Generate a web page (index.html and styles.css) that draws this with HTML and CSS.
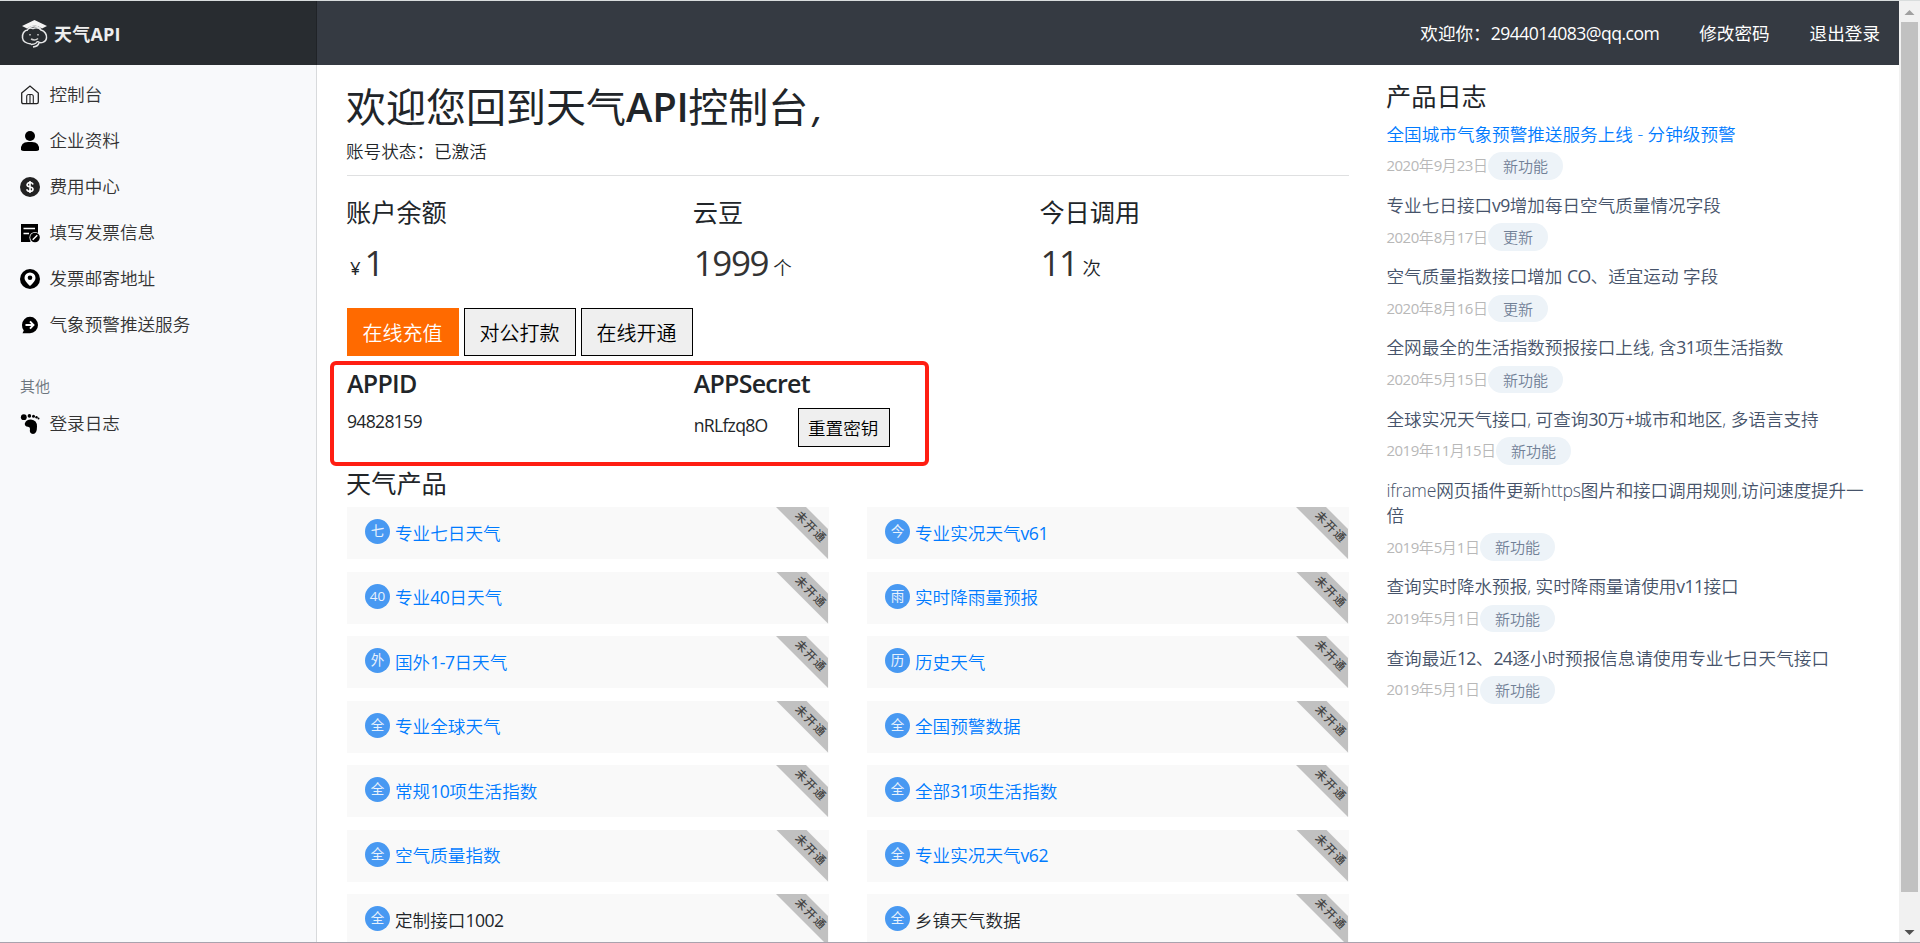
FILE: index.html
```html
<!DOCTYPE html>
<html lang="zh-CN">
<head>
<meta charset="utf-8">
<title>天气API控制台</title>
<link rel="stylesheet" href="styles.css">
</head>
<body>
<div class="page">
  <div class="app">
    <header class="topbar">
      <div class="brand">
        <svg class="brand-icon" width="28" height="30" viewBox="0 0 28 30" fill="none">
          <path d="M1 7 13.500 1 26 7 21 9.500Q13.500 3.500 6 9.500Z" fill="#f4f4f4"/>
          <path d="M7 9.500Q13 4.500 20 9.500M7 11C3 11 1 15 1.500 19C2 23 6 24.500 10 25M20 11C24 12 26 16 25.500 19C25 24 19 24.500 17 22.500M6.500 10.500Q9 8 12 9.500Q17 7.500 20.500 11.500M10 25.500Q16 25 16.500 22M18 24Q17 27.500 12 28" stroke="#e6e7e8" stroke-width="1.500"/>
          <path d="M9 15v1.500M17 15v1.500M10 20q4 2 7-.500" stroke="#ccc" stroke-width="1.500"/>
        </svg>
        <span class="brand-name">天气API</span>
      </div>
      <nav class="usernav">
        <a class="hello">欢迎你：<span class="lat">2944014083@qq.com</span></a>
        <a>修改密码</a>
        <a>退出登录</a>
      </nav>
    </header>
    <div class="body">
      <aside class="sidebar">
        <a class="item"><svg viewBox="0 0 20 20" fill="none" stroke="#222" stroke-width="1.300"><path d="M1.700 8 10 1l8.300 7v9q0 1.600-1.600 1.600H3.300q-1.600 0-1.600-1.600z"/><path d="M6.700 18.500V11.500q0-2 2-2h2.600q2 0 2 2v7M10 9.500v9" stroke-width="1.100"/></svg>控制台</a>
        <a class="item"><svg viewBox="0 0 20 20"><circle cx="10" cy="5" r="5"/><path d="M1 19q-.500-8 7-8h4q7.500 0 7 8-1 1-3 1H4q-2 0-3-1z"/></svg>企业资料</a>
        <a class="item"><svg viewBox="0 0 20 20"><circle cx="10" cy="10" r="10" fill="#222"/><path d="M13 7.500Q12.500 5.500 10 5.500T7 7.800Q7 9.500 10 10T13 12.300Q13 14.500 10 14.500T6.900 12.300M10 4v12" fill="none" stroke="#fff" stroke-width="1.600"/></svg>费用中心</a>
        <a class="item"><svg viewBox="0 0 20 20"><path d="M1 1h17v9l-8 9H1z"/><circle cx="15" cy="14.500" r="5.600" fill="#f8f9fb"/><circle cx="15" cy="14.500" r="4.800"/><path d="M3.500 5.500H15M3.500 10.500H9M12.700 16.800l4.600-4.600" stroke="#fff" stroke-width="1.400"/></svg>填写发票信息</a>
        <a class="item"><svg viewBox="0 0 20 20"><circle cx="10" cy="10" r="10"/><path d="M10 17Q4.500 12 4.500 9a5.500 5.500 0 0 1 11 0q0 3-5.500 8z" fill="#fff"/><circle cx="10" cy="8.700" r="2.300"/></svg>发票邮寄地址</a>
        <a class="item"><svg viewBox="0 0 20 20"><path d="M2 10a8 8.300 0 1 1 8 8.300H2.500l1.300-2.800A8 8 0 0 1 2 10z"/><path d="M5.500 10H13M10 6.300 13.500 10 10 13.700" fill="none" stroke="#fff" stroke-width="1.900"/></svg>气象预警推送服务</a>
        <h6 class="group">其他</h6>
        <a class="item"><svg viewBox="0 0 20 20"><circle cx="3.800" cy="3.200" r="2.900"/><circle cx="9.400" cy="1.900" r="1.800"/><circle cx="13.500" cy="2.300" r="1.500"/><circle cx="16.500" cy="3.200" r="1.200"/><circle cx="18.500" cy="4.500" r="1"/><path d="M4.800 9.500Q6 5.500 11 5.500q6 .500 6 7 0 7.500-4 7.500-4-.500-3-5 .300-2-2-2.200-3.500-.300-3.200-3.300z"/></svg>登录日志</a>
      </aside>
      <main class="content">
        <h1>欢迎您回到天气<b>API</b>控制台<i>,</i></h1>
        <p class="status">账号状态：已激活</p>
        <section class="stats">
          <div><h4>账户余额</h4><p class="num"><small class="yen">¥</small><span>1</span></p></div>
          <div><h4>云豆</h4><p class="num"><span>1999</span><small>个</small></p></div>
          <div><h4>今日调用</h4><p class="num"><span>11</span><small>次</small></p></div>
        </section>
        <div class="actions"><button class="btn primary">在线充值</button><button class="btn">对公打款</button><button class="btn">在线开通</button></div>
        <section class="keys">
          <div><h4 class="en">APPID</h4><p class="appid lat">94828159</p></div>
          <div><h4 class="en">APPSecret</h4><div class="secret"><span class="lat">nRLfzq8O</span><button class="btn small">重置密钥</button></div></div>
          <div class="marker"></div>
        </section>
        <h4 class="products-title">天气产品</h4>
        <section class="products" id="products"></section>
      </main>
      <aside class="logs">
        <h4>产品日志</h4>
        <article><a class="title link">全国城市气象预警推送服务上线 - 分钟级预警</a><div class="meta"><time><span class="lat">2020</span>年<span class="lat">9</span>月<span class="lat">23</span>日</time><span class="tag">新功能</span></div></article>
        <article><a class="title">专业七日接口<span class="lat">v9</span>增加每日空气质量情况字段</a><div class="meta"><time><span class="lat">2020</span>年<span class="lat">8</span>月<span class="lat">17</span>日</time><span class="tag">更新</span></div></article>
        <article><a class="title">空气质量指数接口增加 <span class="lat">CO</span>、适宜运动 字段</a><div class="meta"><time><span class="lat">2020</span>年<span class="lat">8</span>月<span class="lat">16</span>日</time><span class="tag">更新</span></div></article>
        <article><a class="title">全网最全的生活指数预报接口上线, 含<span class="lat">31</span>项生活指数</a><div class="meta"><time><span class="lat">2020</span>年<span class="lat">5</span>月<span class="lat">15</span>日</time><span class="tag">新功能</span></div></article>
        <article><a class="title">全球实况天气接口, 可查询<span class="lat">30</span>万<span class="lat">+</span>城市和地区, 多语言支持</a><div class="meta"><time><span class="lat">2019</span>年<span class="lat">11</span>月<span class="lat">15</span>日</time><span class="tag">新功能</span></div></article>
        <article><a class="title tight">iframe网页插件更新https图片和接口调用规则,访问速度提升一倍</a><div class="meta"><time><span class="lat">2019</span>年<span class="lat">5</span>月<span class="lat">1</span>日</time><span class="tag">新功能</span></div></article>
        <article><a class="title">查询实时降水预报, 实时降雨量请使用<span class="lat">v11</span>接口</a><div class="meta"><time><span class="lat">2019</span>年<span class="lat">5</span>月<span class="lat">1</span>日</time><span class="tag">新功能</span></div></article>
        <article><a class="title">查询最近<span class="lat">12</span>、<span class="lat">24</span>逐小时预报信息请使用专业七日天气接口</a><div class="meta"><time><span class="lat">2019</span>年<span class="lat">5</span>月<span class="lat">1</span>日</time><span class="tag">新功能</span></div></article>
      </aside>
    </div>
  </div>
  <div class="scrollbar">
    <svg width="19" height="21" viewBox="0 0 19 21"><path d="M4.500 14 9.500 9l5 5z" fill="#a0a0a0"/></svg>
    <div class="thumb"></div>
    <svg width="19" height="21" viewBox="0 0 19 21"><path d="M4.500 9 9.500 14l5-5z" fill="#505050"/></svg>
  </div>
</div>
<script src="products.js"></script>
</body>
</html>
```
FILE: products.js
```js
const products = [
  ["七", "专业七日天气"], ["今", "专业实况天气v61"],
  ["40", "专业40日天气"], ["雨", "实时降雨量预报"],
  ["外", "国外1-7日天气"], ["历", "历史天气"],
  ["全", "专业全球天气"], ["全", "全国预警数据"],
  ["全", "常规10项生活指数"], ["全", "全部31项生活指数"],
  ["全", "空气质量指数"], ["全", "专业实况天气v62"],
  ["全", "定制接口1002", true], ["全", "乡镇天气数据", true]
];
document.getElementById("products").innerHTML = products.map(([mark, name, plain]) => {
  const label = name.replace(/[\w-]+/g, '<span class="lat">$&</span>');
  return `<a class="card${plain ? " plain" : ""}"><span class="dot">${mark}</span><span>${label}</span><span class="ribbon"><em>未开通</em></span></a>`;
}).join("");
```
FILE: styles.css
```css
* { box-sizing: border-box; }
html { height: 100%; overflow: hidden; }
body {
  margin: 0;
  height: 100%;
  overflow: hidden;
  font-family: "Open Sans", "Noto Sans CJK SC", sans-serif;
  font-size: 17.6px;
  font-weight: 350;
  line-height: 25px;
  color: #212529;
  background: #fff;
}
h1, h4, h6, p { margin: 0; font-weight: 400; }
.lat { font-weight: 400; letter-spacing: -0.035em; }

.page { display: flex; height: 943px; border-top: 1px solid #d9dddd; border-bottom: 1px solid #a9a3ae; }
.app { flex: 1; min-width: 0; display: flex; flex-direction: column; }

.topbar { display: flex; flex: 0 0 64px; background: #353a42; color: #fff; }
.brand { width: 317px; display: flex; align-items: center; padding-left: 21px; background: #282c30; border-right: 1px solid #202327; }
.brand-icon { margin-top: 2px; }
.brand-name { margin: 2px 0 0 5px; font-size: 18px; font-weight: 700; letter-spacing: 0.2px; color: #eee; }
.usernav { margin-left: auto; display: flex; align-items: center; gap: 40px; padding: 0 19px 0 0; font-weight: 400; }
.hello .lat { letter-spacing: -0.031em; }

.body { flex: 1; min-height: 0; display: flex; overflow: hidden; }
.sidebar { width: 317px; flex: none; padding: 6px 0 0 20px; background: #f8f9fb; border-right: 1px solid #d8dadc; color: #333; }
.item { display: flex; align-items: center; height: 46px; gap: 9.500px; }
.item svg { width: 20px; height: 20px; margin-top: 2px; }
.group { margin: 27px 0 0; height: 26px; font-size: 15px; font-weight: 350; color: #6c757d; }

.content { width: 1002px; flex: none; margin-left: 30px; }
h1 { margin-top: 18px; font-size: 40px; line-height: 48px; white-space: nowrap; text-indent: -1px; }
h1 b { font-weight: 600; letter-spacing: -0.3px; }
h1 i { font-weight: 400; margin-left: 5px; }
.status { margin-top: 8px; padding-bottom: 11px; border-bottom: 1px solid #dfe0e1; height: 37px; font-weight: 350; text-indent: -1px; }
h4 { font-size: 25.200px; line-height: 30px; text-indent: -1px; }
.stats { display: grid; grid-template-columns: repeat(3, 346.700px); margin-top: 21px; }
.num { display: flex; align-items: baseline; margin-top: 16px; height: 41px; line-height: 40px; }
.num span { font-size: 35px; font-weight: 400; letter-spacing: -1.4px; color: #333; }
.num small { position: relative; top: -1px; font-size: 18.5px; font-weight: 350; margin-left: 5px; }
.num .yen { margin: 0 4px 0 3px; font-size: 18.5px; font-weight: 400; }

.actions { display: flex; gap: 5px; margin-top: 24px; }
.btn { width: 112px; height: 48px; padding: 0 1px 0 0; border: 1px solid #000; background: #efefef; font: 350 20px "Noto Sans CJK SC", sans-serif; color: #000; }
.btn.primary { border-color: #ff6a00; background: #ff6a00; color: #fff; }
.btn.small { width: 92px; height: 39px; font-size: 17.6px; }

.keys { position: relative; display: grid; grid-template-columns: repeat(3, 346.700px); height: 100px; margin-top: 12px; }
.en { font-size: 25px; font-weight: 600; letter-spacing: -0.75px; text-indent: 0; }
.appid { margin-top: 11px; font-weight: 400; letter-spacing: -0.04em; }
.secret { display: flex; align-items: center; margin-top: 10px; }
.secret .lat { width: 104px; margin-top: -5px; letter-spacing: -0.04em; }
.marker { position: absolute; left: -17px; top: -7px; width: 599px; height: 105px; border: 4px solid #ff1e12; border-radius: 6px; }

.products { display: grid; grid-template-columns: 482px 482px; column-gap: 38px; grid-auto-rows: 52px; row-gap: 12.500px; margin-top: 9px; }
.card { position: relative; display: flex; align-items: center; gap: 5px; padding-left: 18px; background: #f9f9f9; color: #007bff; overflow: hidden; }
.card.plain { color: #212529; }
.card .lat { letter-spacing: -0.028em; }
.dot { width: 25px; height: 25px; margin-top: -3px; border-radius: 50%; background: #4899f2; color: #e8f2fd; font-size: 13.500px; font-weight: 400; line-height: 25px; text-align: center; }
.ribbon { position: absolute; right: 1px; top: 0; width: 52px; height: 52px; background: #c1c1c1; clip-path: polygon(0 0, 30px 0, 52px 22px, 52px 52px); }
.ribbon em { position: absolute; left: 9px; top: 10px; width: 52px; font-size: 11.500px; font-style: normal; font-weight: 500; line-height: 20px; letter-spacing: 1.5px; text-align: center; color: #444; transform: rotate(45deg); }

.logs { width: 492px; margin: 16px 0 0 38px; }
.logs h4 { margin-bottom: 10.500px; }
.logs article { margin-bottom: 13.300px; }
.title { display: block; margin-left: -0.5px; color: #46536a; }
.title.link { color: #007bff; }
.title.tight { letter-spacing: -0.16px; }
.meta { display: flex; align-items: center; margin-top: 5.500px; height: 27.500px; font-size: 15px; }
.meta time { color: #b8b8b8; line-height: 25px; margin: 0 0 0 -0.5px; }
.tag { height: 27.500px; padding: 0 15px; border-radius: 14px; background: #edf3f8; color: #718096; line-height: 28px; }

.scrollbar { width: 21px; display: flex; flex-direction: column; align-items: center; background: #f1f1f1; }
.scrollbar svg { flex: none; }
.thumb { width: 17px; height: 870px; background: #c1c1c1; margin-bottom: auto; }
```
